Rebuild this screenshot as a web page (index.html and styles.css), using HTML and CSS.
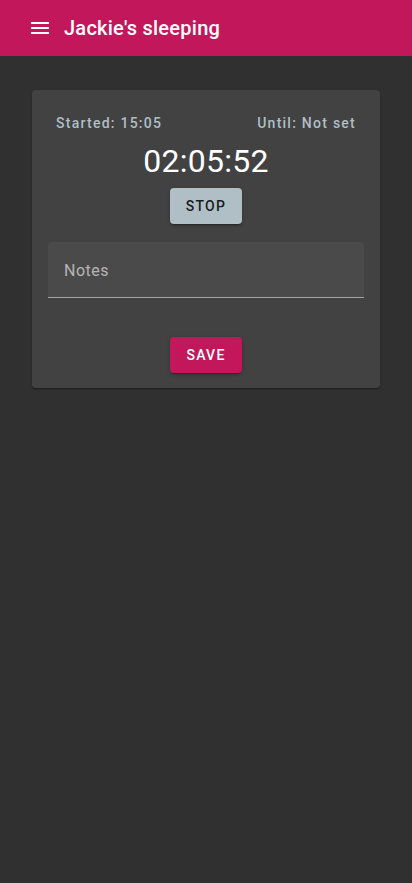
FILE: index.html
```html
<!DOCTYPE html>
<html>
<head>
<meta charset="utf-8">
<link rel="stylesheet" href="styles.css">
</head>
<body>
<header class="toolbar">
  <svg class="menu" width="24" height="24" viewBox="0 0 24 24"><path d="M3 18h18v-2H3v2zm0-5h18v-2H3v2zm0-7v2h18V6H3z" fill="#fff"/></svg>
  <h1 class="title">Jackie's sleeping</h1>
</header>
<main class="content">
  <section class="card">
    <div class="info">
      <span>Started: 15:05</span>
      <span>Until: Not set</span>
    </div>
    <div class="timer">02:05:52</div>
    <div class="center"><button class="btn btn-stop">STOP</button></div>
    <div class="field">
      <span class="label">Notes</span>
    </div>
    <div class="center actions"><button class="btn btn-save">SAVE</button></div>
  </section>
</main>
</body>
</html>
```

FILE: styles.css
```css
* { box-sizing: border-box; }
html, body { margin: 0; padding: 0; }
body {
  background: #303030;
  font-family: Roboto, "Noto Sans", sans-serif;
  height: 883px;
}
.toolbar {
  height: 56px;
  background: #c2185b;
  display: flex;
  align-items: center;
  padding: 0 16px 0 28px;
}
.menu { display: block; margin-right: 12px; }
.title {
  margin: 0;
  color: #fff;
  font-size: 20px;
  font-weight: 500;
  letter-spacing: 0.25px;
}
.content { padding: 34px 32px; }
.card {
  background: #424242;
  border-radius: 4px;
  padding: 16px 16px 15px;
  box-shadow: 0 2px 1px -1px rgba(0,0,0,.2), 0 1px 1px 0 rgba(0,0,0,.14), 0 1px 3px 0 rgba(0,0,0,.12);
}
.info {
  display: flex;
  justify-content: space-between;
  padding: 7px 8px 8px;
  font-size: 14px;
  line-height: 20px;
  letter-spacing: 1.25px;
  font-weight: 500;
  color: #b0bec5;
}
.timer {
  text-align: center;
  color: #fff;
  font-size: 32px;
  line-height: 40px;
  letter-spacing: 0.25px;
}
.center { display: flex; justify-content: center; }
.btn {
  width: 72px;
  height: 36px;
  border: none;
  border-radius: 4px;
  font-family: Roboto, sans-serif;
  font-size: 14px;
  font-weight: 500;
  letter-spacing: 1.25px;
  box-shadow: 0 3px 1px -2px rgba(0,0,0,.2), 0 2px 2px 0 rgba(0,0,0,.14), 0 1px 5px 0 rgba(0,0,0,.12);
}
.btn-stop { background: #b0bec5; color: rgba(0,0,0,.87); margin-top: 7px; }
.btn-save { background: #c2185b; color: #fff; }
.field {
  margin-top: 18px;
  height: 56px;
  background: #4a4a4a;
  border-radius: 4px 4px 0 0;
  border-bottom: 1px solid #a5a5a5;
  padding: 0 16px;
  display: flex;
  align-items: center;
}
.label {
  color: rgba(255,255,255,.6);
  font-size: 16px;
  letter-spacing: 0.5px;
  padding-top: 2px;
}
.actions { margin-top: 39px; }
```
